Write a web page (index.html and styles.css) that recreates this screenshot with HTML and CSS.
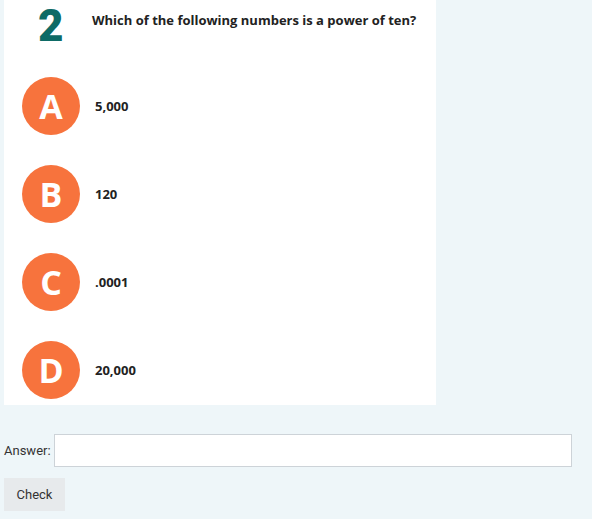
FILE: index.html
```html
<!DOCTYPE html>
<html lang="en">
<head>
    <meta charset="UTF-8">
    <meta name="viewport" content="width=device-width, initial-scale=1.0">
    <title>Power of ten</title>
    <link rel="stylesheet" href="styles.css">
</head>
<body>
    <div class="question-card">
        <div class="question-head">
            <span class="question-num">2</span>
            <span class="question-text">Which of the following numbers is a power of ten?</span>
        </div>
        <div class="choices">
            <div class="choice"><span class="letter">A</span><span class="choice-text">5,000</span></div>
            <div class="choice"><span class="letter">B</span><span class="choice-text">120</span></div>
            <div class="choice"><span class="letter">C</span><span class="choice-text">.0001</span></div>
            <div class="choice"><span class="letter">D</span><span class="choice-text">20,000</span></div>
        </div>
    </div>
    <div class="answer-row">
        <label for="answer">Answer:</label>
        <input type="text" id="answer">
    </div>
    <button class="check-btn">Check</button>
</body>
</html>
```

FILE: styles.css
```css
body {
    margin: 0;
    padding: 0 4px;
    background-color: #eef6f9;
    font-family: Roboto, "Liberation Sans", sans-serif;
    color: #333;
}
.question-card {
    width: 432px;
    height: 405px;
    overflow: hidden;
    background-color: #fff;
    box-sizing: border-box;
    padding-left: 18px;
}
.question-head {
    display: flex;
    align-items: flex-start;
    height: 48px;
}
.question-num {
    width: 70px;
    padding-left: 16px;
    box-sizing: border-box;
    font-family: Roboto, sans-serif;
    font-weight: 900;
    font-size: 44px;
    line-height: normal;
    color: #0e6b66;
}
.question-text {
    margin-top: 11px;
    line-height: 18px;
    font-family: "Open Sans", sans-serif;
    font-weight: 700;
    font-size: 13px;
    color: #222;
}
.choices {
    display: flex;
    flex-direction: column;
    gap: 30px;
    margin-top: 29px;
}
.choice {
    display: flex;
    align-items: center;
}
.letter {
    width: 58px;
    height: 58px;
    border-radius: 50%;
    background-color: #f7733d;
    color: #fff;
    font-family: "Open Sans", sans-serif;
    font-weight: 700;
    font-size: 34px;
    display: flex;
    align-items: center;
    justify-content: center;
    margin-right: 15px;
}
.choice-text {
    font-family: "Open Sans", sans-serif;
    font-weight: 700;
    font-size: 13px;
    color: #222;
}
.answer-row {
    display: flex;
    align-items: center;
    margin-top: 29px;
    font-size: 13px;
}
.answer-row label {
    margin-right: 3px;
}
.answer-row input {
    width: 518px;
    height: 33px;
    box-sizing: border-box;
    border: 1px solid #cdd3d8;
    background-color: #fff;
    padding: 4px 6px;
}
.check-btn {
    margin-top: 11px;
    width: 61px;
    height: 33px;
    border: none;
    background-color: #e7eaec;
    font-family: Roboto, sans-serif;
    font-size: 13px;
    color: #333;
}
```
